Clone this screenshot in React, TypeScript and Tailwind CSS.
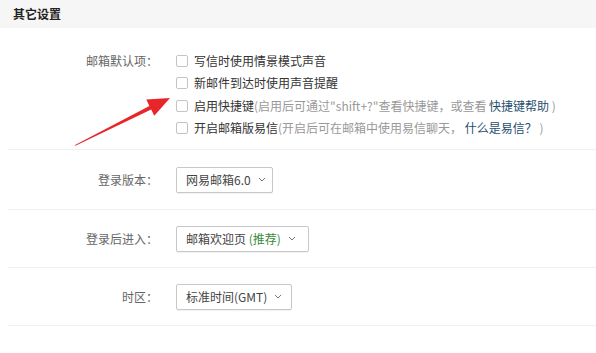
import React from "react";

const font = { fontFamily: '"Noto Sans CJK SC", "Microsoft YaHei", sans-serif' };

function Check({ children }: { children: React.ReactNode }) {
  return (
    <div className="flex items-center h-[22.3px]">
      <span className="w-[12px] h-[12px] border border-[#c4c4c4] rounded-[2px] bg-white shrink-0" />
      <span className="ml-[6px] text-[12px] text-[#333] whitespace-nowrap leading-none">{children}</span>
    </div>
  );
}

function Chevron() {
  return (
    <svg width="8" height="5" viewBox="0 0 8 5" className="ml-[7px]">
      <path d="M1 1 L4 4 L7 1" fill="none" stroke="#777" strokeWidth="1" />
    </svg>
  );
}

function Select({ children, w }: { children: React.ReactNode; w: string }) {
  return (
    <div className={`flex items-center h-[26px] border border-[#c8c8c8] rounded-[2px] bg-white pl-[9px] shadow-[0_1px_1px_rgba(0,0,0,0.06)] ${w}`}>
      <span className="text-[12px] text-[#444] whitespace-nowrap leading-none">{children}</span>
      <Chevron />
    </div>
  );
}

function Label({ children }: { children: React.ReactNode }) {
  return (
    <div className="w-[150px] shrink-0 text-right text-[12px] text-[#666] whitespace-nowrap leading-none">{children}</div>
  );
}

export default function App() {
  return (
    <div className="relative w-[596px] h-[353px] bg-white overflow-hidden" style={font}>
      <div className="h-[28px] bg-[#f6f6f6] flex items-center pl-[13px]">
        <span className="text-[12px] font-bold text-[#222]">其它设置</span>
      </div>
      <div className="pl-[8px]">
        <div className="flex pt-[22px] pb-[10px] border-b border-[#f0f0f0]">
          <div className="h-[22.3px] flex items-center">
            <Label>邮箱默认项：</Label>
          </div>
          <div className="ml-[18px] flex flex-col">
            <Check>写信时使用情景模式声音</Check>
            <Check>新邮件到达时使用声音提醒</Check>
            <Check>
              启用快捷键
              <span className="text-[#999]">(启用后可通过"shift+?"查看快捷键，或查看 </span>
              <span className="text-[#1f4f6f]">快捷键帮助</span>
              <span className="text-[#999]"> )</span>
            </Check>
            <Check>
              开启邮箱版易信
              <span className="text-[#999]">(开启后可在邮箱中使用易信聊天， </span>
              <span className="text-[#1f4f6f]">什么是易信？</span>
              <span className="text-[#999]"> )</span>
            </Check>
          </div>
        </div>
        <div className="flex items-center h-[60px] border-b border-[#f0f0f0]">
          <Label>登录版本：</Label>
          <div className="ml-[18px]">
            <Select w="w-[97px]">网易邮箱6.0</Select>
          </div>
        </div>
        <div className="flex items-center h-[58px] border-b border-[#f0f0f0]">
          <Label>登录后进入：</Label>
          <div className="ml-[18px]">
            <Select w="w-[133px]">
              邮箱欢迎页 <span className="text-[#3b8a3b]">(推荐)</span>
            </Select>
          </div>
        </div>
        <div className="flex items-center h-[58px] border-b border-[#f0f0f0]">
          <Label>时区：</Label>
          <div className="ml-[18px]">
            <Select w="w-[116px]">标准时间(GMT)</Select>
          </div>
        </div>
      </div>
      <svg className="absolute left-0 top-0 pointer-events-none" width="596" height="353">
        <polygon
          points="74.6,145.2 149.4,105.9 146.3,99.6 170,98 154.3,115.8 151.2,109.5 75.4,145.8"
          fill="#e8262a"
        />
      </svg>
    </div>
  );
}
